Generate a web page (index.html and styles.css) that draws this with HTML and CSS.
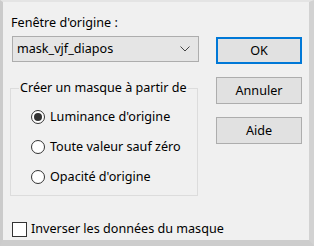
FILE: index.html
```html
<!DOCTYPE html>
<html lang="fr">
<head>
  <meta charset="UTF-8" />
  <title>Masque</title>
  <link rel="stylesheet" href="styles.css">
</head>
<body>
  <div class="fenetre">
    <div class="haut">
      <div class="gauche">
        <div class="etiquette">Fenêtre d'origine :</div>
        <div class="liste">
          <span>mask_vjf_diapos</span>
          <svg class="chevron" width="10" height="6" viewBox="0 0 10 6">
            <path d="M0.5 0.5 L5 5 L9.5 0.5" fill="none" stroke="#444" stroke-width="1" />
          </svg>
        </div>

        <fieldset class="groupe">
          <legend>Créer un masque à partir de</legend>
          <div class="option"><span class="radio coche"></span>Luminance d'origine</div>
          <div class="option"><span class="radio"></span>Toute valeur sauf zéro</div>
          <div class="option"><span class="radio"></span>Opacité d'origine</div>
        </fieldset>
      </div>

      <div class="boutons">
        <button class="bouton defaut">OK</button>
        <button class="bouton">Annuler</button>
        <button class="bouton">Aide</button>
      </div>
    </div>

    <div class="case-ligne"><span class="case"></span>Inverser les données du masque</div>
  </div>
</body>
</html>
```

FILE: styles.css
```css
* {
  box-sizing: border-box;
}

body {
  margin: 0;
  background: #cdcdcd;
  font-family: 'Noto Sans', 'Segoe UI', sans-serif;
  font-size: 12.6px;
  line-height: 16px;
  color: #000;
}

.fenetre {
  width: 314px;
  height: 246px;
  background: #f0f0f0;
  border-top: 2px solid #e4e4e4;
  border-left: 3px solid #cbcbcb;
  border-right: 5px solid #d2d2d2;
  border-bottom: 6px solid #cdcdcd;
  padding: 13px 0 0 7px;
}

.haut {
  display: flex;
}

.gauche {
  width: 189px;
}

.etiquette {
  padding-left: 1px;
}

.liste {
  margin: 5px 0 0 2px;
  width: 187px;
  height: 26px;
  background: #e5e5e5;
  border: 1px solid #adadad;
  display: flex;
  align-items: center;
  justify-content: space-between;
  padding: 0 8px 0 4px;
}

.chevron {
  display: block;
}

.groupe {
  margin: 18px 0 0 0;
  width: 188px;
  height: 116px;
  border: 1px solid #dcdcdc;
  padding: 6px 0 0 8px;
}

.groupe legend {
  padding: 0 1px;
}

.option {
  height: 30px;
  display: flex;
  align-items: center;
  padding-left: 12px;
}

.radio {
  width: 14px;
  height: 14px;
  border: 1px solid #333;
  border-radius: 50%;
  background: #fff;
  margin-right: 5px;
  display: flex;
  align-items: center;
  justify-content: center;
}

.radio.coche::after {
  content: '';
  width: 8px;
  height: 8px;
  border-radius: 50%;
  background: #333;
}

.boutons {
  margin-left: 17px;
  padding-top: 22px;
  display: flex;
  flex-direction: column;
  gap: 13px;
}

.bouton {
  width: 86px;
  height: 27px;
  background: #e1e1e1;
  border: 1px solid #adadad;
  font-family: inherit;
  font-size: 12.6px;
  color: #000;
  padding: 0;
}

.bouton.defaut {
  border: 2px solid #0078d7;
}

.case-ligne {
  margin: 25px 0 0 2px;
  display: flex;
  align-items: center;
}

.case {
  width: 15px;
  height: 15px;
  border: 1px solid #333;
  background: #fff;
  margin-right: 4px;
}
```
